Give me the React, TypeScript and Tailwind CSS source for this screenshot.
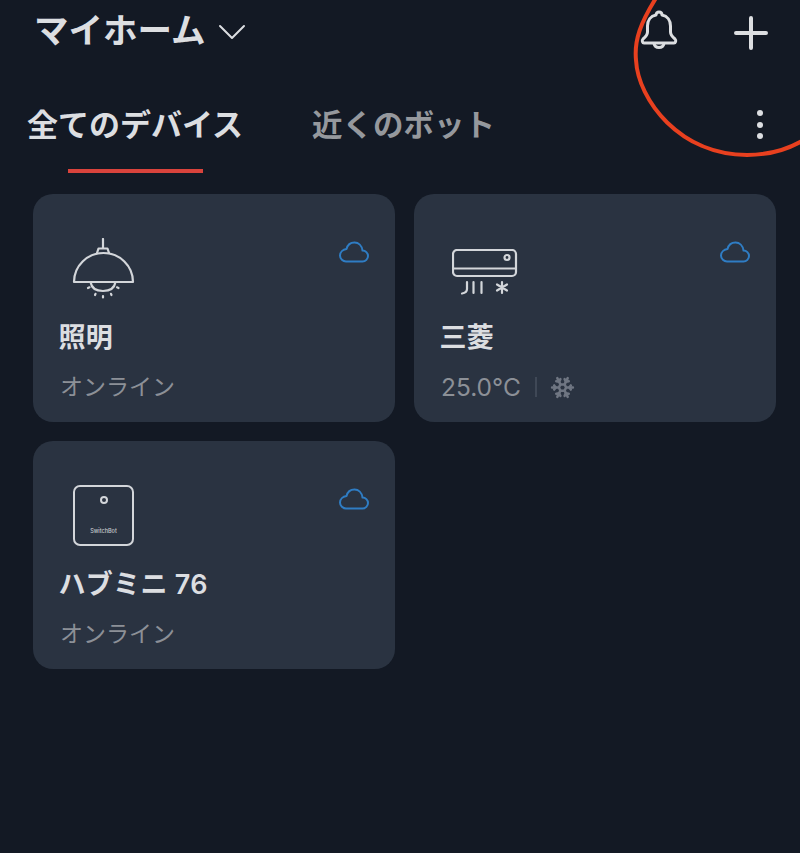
import React from 'react';
import { Snowflake } from 'lucide-react';

const CloudIcon = () => (
  <svg width="32" height="23" viewBox="0 0 32 23" fill="none" stroke="#2f7dc4" strokeWidth="2" strokeLinejoin="round">
    <path d="M8 20.5H24.5C27.5 20.5 30 18 30 15C30 12 27.5 9.5 24.5 9.5C23.8 4.5 20.5 1.5 16.5 1.5C12.5 1.5 9.5 4 8.5 8C5 8.5 2 11 2 14.5C2 18 5 20.5 8 20.5Z" />
  </svg>
);

const LampIcon = () => (
  <svg width="64" height="62" viewBox="0 0 64 62" fill="none" stroke="#d3d6da" strokeWidth="2.2" strokeLinecap="round" strokeLinejoin="round">
    <path d="M32 1V10" />
    <path d="M26 15L27.5 10.5H36.5L38 15" />
    <path d="M3 44A29.5 29 0 0 1 62 44Z" />
    <path d="M19.5 44C20.5 50 25.5 53 32 53C38.5 53 43.5 50 44.5 44" />
    <path d="M17 50L18.5 49.3M24 57L24.5 55.8M32 59.5V58M40.5 57L40 55.8M47.5 50L46 49.3" />
  </svg>
);

const AcIcon = () => (
  <svg width="66" height="46" viewBox="0 0 66 46" fill="none" stroke="#d3d6da" strokeWidth="2.2" strokeLinecap="round" strokeLinejoin="round">
    <rect x="1" y="1" width="63" height="26" rx="4" />
    <path d="M1 19.5H64" />
    <circle cx="55" cy="8.5" r="2.5" />
    <path d="M15 33V40C15 42 13 44 10 44.5" />
    <path d="M21.5 33V44M29.5 33V44" />
    <path d="M50 33V44M45 35.5L55 41.5M55 35.5L45 41.5" />
  </svg>
);

const HubIcon = () => (
  <div className="relative w-[61px] h-[61px] rounded-[7px] border-2 border-[#d3d6da] flex flex-col items-center">
    <div className="w-[8px] h-[8px] mt-[9px] rounded-full border-2 border-[#d3d6da]"></div>
    <div className="mt-[24px] text-[5.5px] leading-[7px] font-medium text-[#c8cbd0]">SwitchBot</div>
  </div>
);

const BellIcon = () => (
  <svg width="38" height="40" viewBox="0 0 38 40" fill="none" stroke="#dcdee1" strokeWidth="3" strokeLinecap="round" strokeLinejoin="round">
    <path d="M19 2C20.8 2 22 3.2 22 5C27.5 6 30.5 10.5 30.5 16V22C30.5 25 32.5 27 35 29C36.5 30.5 35.5 33 34 33H4C2.5 33 1.5 30.5 3 29C5.5 27 7.5 25 7.5 22V16C7.5 10.5 10.5 6 16 5C16 3.2 17.2 2 19 2Z" />
    <path d="M14 33.5C14.5 36 16.5 37.5 19 37.5C21.5 37.5 23.5 36 24 33.5" />
  </svg>
);

const PlusIcon = () => (
  <svg width="34" height="34" viewBox="0 0 34 34" fill="none" stroke="#dcdee1" strokeWidth="4" strokeLinecap="round">
    <path d="M17 2V32M2 17H32" />
  </svg>
);

const devices = [
  { id: 1, name: '照明', icon: <LampIcon />, iconClass: 'pt-0 pl-[12px]' },
  { id: 2, name: '三菱', icon: <AcIcon />, iconClass: 'pt-[11px] pl-[12px]' },
  { id: 3, name: 'ハブミニ 76', icon: <HubIcon />, iconClass: 'pt-0 pl-[14px]' },
];

const App: React.FC = () => {
  return (
    <div
      className="relative w-[800px] h-[853px] overflow-hidden bg-[#131924] text-[#dcdee1]"
      style={{ fontFamily: 'Inter, "Noto Sans CJK JP", sans-serif' }}
    >
      {/* Header */}
      <div className="flex items-center h-[62px] pl-[34px] pr-[32px]">
        <div className="text-[34.5px] leading-[62px] font-semibold">マイホーム</div>
        <svg className="ml-[13px] mt-[2px]" width="28" height="16" viewBox="0 0 28 16" fill="none" stroke="#dcdee1" strokeWidth="2" strokeLinecap="round" strokeLinejoin="round">
          <path d="M2 2L14 14L26 2" />
        </svg>
        <div className="ml-auto flex items-center gap-[56px]">
          <div className="-mt-[3px]">
            <BellIcon />
          </div>
          <div className="mt-[3px]">
            <PlusIcon />
          </div>
        </div>
      </div>

      {/* Tabs */}
      <div className="flex items-start mt-[43px] pl-[27px] pr-[37px]">
        <div className="flex flex-col items-center">
          <div className="text-[31px] leading-[40px] font-semibold">全てのデバイス</div>
          <div className="w-[135px] h-[4px] mt-[24px] bg-[#d9433c]"></div>
        </div>
        <div className="ml-[69px] text-[30.5px] leading-[40px] font-semibold text-[#95989d]">近くのボット</div>
        <div className="ml-auto flex flex-col gap-[5.5px] pt-[5px]">
          <div className="w-[6px] h-[6px] rounded-full bg-[#dcdee1]"></div>
          <div className="w-[6px] h-[6px] rounded-full bg-[#dcdee1]"></div>
          <div className="w-[6px] h-[6px] rounded-full bg-[#dcdee1]"></div>
        </div>
      </div>

      {/* Device cards */}
      <div className="grid grid-cols-2 gap-[19px] mt-[21px] ml-[33px] w-[743px]">
        {devices.map((device) => (
          <div key={device.id} className="h-[228px] rounded-[20px] bg-[#2a3341] pt-[44px] pl-[26px] pr-[25px]">
            <div className="flex justify-between h-[62px]">
              <div className={device.iconClass}>{device.icon}</div>
              <div className="pt-[3px]">
                <CloudIcon />
              </div>
            </div>
            <div className="mt-[18px] -ml-[0.5px] text-[27px] leading-[40px] font-semibold tracking-[0.3px]">{device.name}</div>
            {device.id === 2 ? (
              <div className="flex items-center h-[34px] mt-[12px] pl-[1px] text-[24.5px] text-[#8c9097]">
                <span>25.0°C</span>
                <div className="w-[2px] h-[20px] ml-[14px] bg-[#3f4856]"></div>
                <Snowflake className="ml-[13px] text-[#6f7682]" size={25} strokeWidth={2.4} />
              </div>
            ) : (
              <div className="h-[34px] mt-[12px] ml-[1px] text-[23px] leading-[34px] text-[#8c9097]">オンライン</div>
            )}
          </div>
        ))}
      </div>

      {/* Red annotation circle over the screenshot */}
      <svg className="absolute top-0 left-0" width="800" height="853" viewBox="0 0 800 853" fill="none" stroke="#e8401f" strokeWidth="4">
        <path d="M656 -2C641 22 634 40 636 60C638 100 680 155 747 155C770 155 788 149 802 141" />
      </svg>
    </div>
  );
};

export default App;
